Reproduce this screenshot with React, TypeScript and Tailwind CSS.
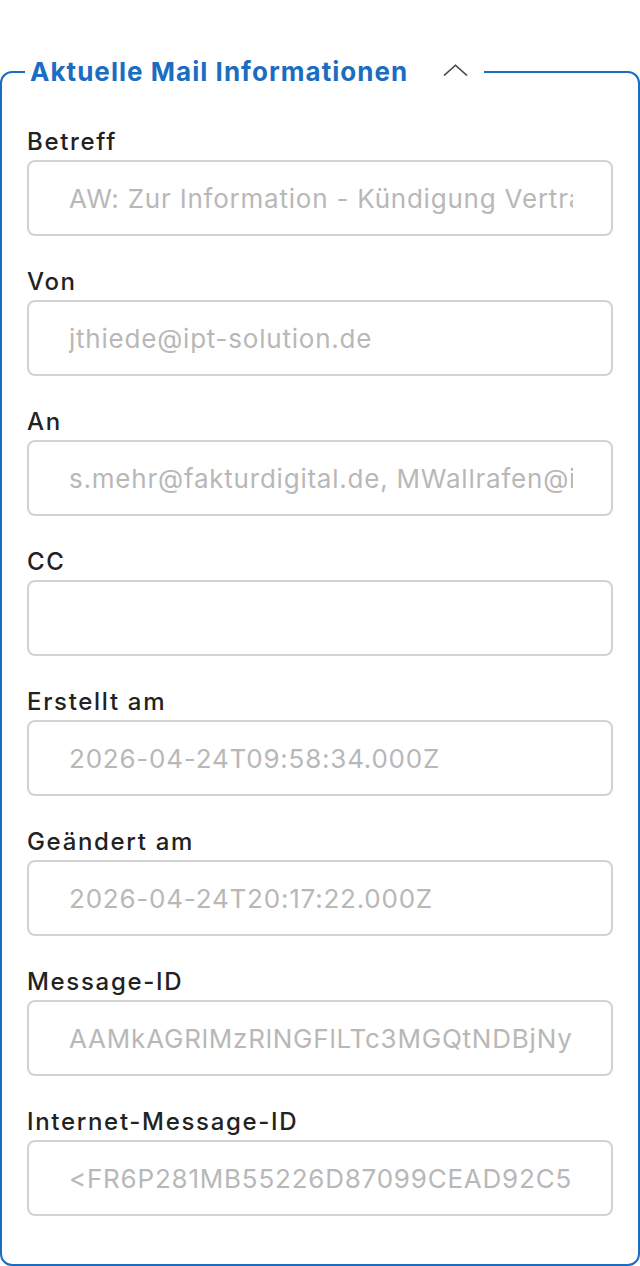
import React from 'react';

// Felder der aktuellen Mail
const fields: { label: string; value: string }[] = [
    { label: 'Betreff', value: 'AW: Zur Information - Kündigung Vertrag Nr. 2026-0412' },
    { label: 'Von', value: 'jthiede@ipt-solution.de' },
    { label: 'An', value: 's.mehr@fakturdigital.de, MWallrafen@ipt-solution.de' },
    { label: 'CC', value: '' },
    { label: 'Erstellt am', value: '2026-04-24T09:58:34.000Z' },
    { label: 'Geändert am', value: '2026-04-24T20:17:22.000Z' },
    { label: 'Message-ID', value: 'AAMkAGRlMzRlNGFlLTc3MGQtNDBjNy04ZTEyLWE5ZDgwZjE2NzY5NwBGAAAAAAA' },
    { label: 'Internet-Message-ID', value: '<FR6P281MB55226D87099CEAD92C5B1A2E9F2A9@FR6P281MB5522.DEUP281.PROD.OUTLOOK.COM>' },
];

const ChevronUp = () => (
    <svg width="25" height="12" viewBox="0 0 25 12" fill="none" className="block">
        <path d="M1 11.5 L12.5 1.2 L24 11.5" stroke="#444" strokeWidth="1.6" />
    </svg>
);

export default function App() {
    return (
        <div className="min-h-screen bg-white pt-[54px] font-['Inter','Noto_Sans',sans-serif]">
            <fieldset className="border-2 border-[#1a6dc0] rounded-[12px] px-[25px] pb-[48px] pt-[34px] min-w-0">
                <legend className="flex items-center pl-[5px] pr-[16px] -ml-[2px]">
                    <span className="text-[26px] leading-[36px] font-bold tracking-[0.04em] text-[#1a6dc0]">
                        Aktuelle Mail Informationen
                    </span>
                    <span className="ml-[35px] -mt-[4px]">
                        <ChevronUp />
                    </span>
                </legend>

                <div className="flex flex-col gap-[28px]">
                    {fields.map((f) => (
                        <div key={f.label} className="flex flex-col">
                            <label className="text-[24px] leading-[36px] font-medium tracking-[0.07em] text-[#222]">
                                {f.label}
                            </label>
                            <input
                                type="text"
                                readOnly
                                value={f.value}
                                className="h-[76px] w-full border-2 border-[#d2d2d2] rounded-[8px] pl-[40px] pr-[38px] text-[26px] tracking-[0.03em] text-[#b8b8b8] bg-white outline-none"
                            />
                        </div>
                    ))}
                </div>
            </fieldset>
        </div>
    );
}
